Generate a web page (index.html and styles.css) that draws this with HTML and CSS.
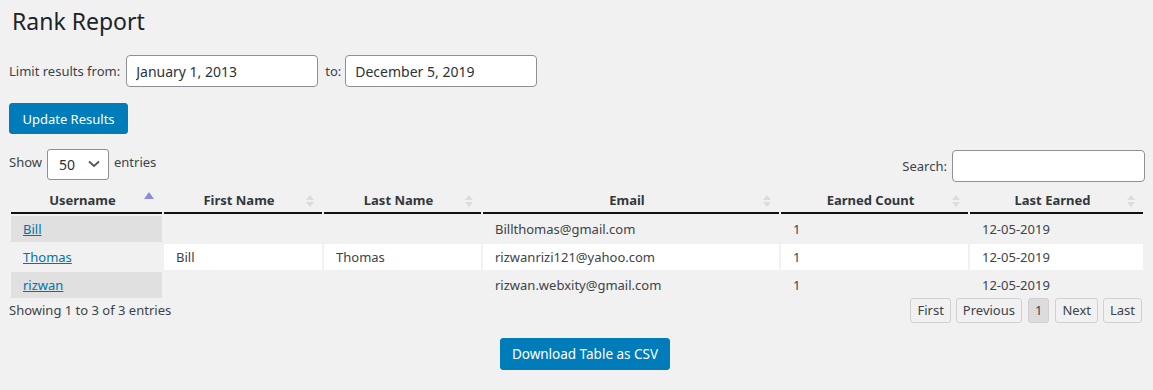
FILE: index.html
```html
<!DOCTYPE html>
<html lang="en">
<head>
  <meta charset="UTF-8" />
  <title>Rank Report</title>
  <link rel="stylesheet" href="styles.css">
</head>
<body>
  <div class="wrap">
    <h1>Rank Report</h1>

    <form class="filters">
      <div class="range">
        <label for="from">Limit results from:</label>
        <input id="from" type="text" value="January 1, 2013" />
        <label for="to">to:</label>
        <input id="to" type="text" value="December 5, 2019" />
      </div>
      <button type="button" class="btn-primary">Update Results</button>
    </form>

    <div class="dt-wrapper">
      <div class="dt-top">
        <div class="dt-length">
          <span>Show</span>
          <div class="select">
            <span>50</span>
            <svg width="12" height="8" viewBox="0 0 12 8"><path d="M1 1.5 L6 6 L11 1.5" fill="none" stroke="#50575e" stroke-width="1.8"/></svg>
          </div>
          <span>entries</span>
        </div>
        <div class="dt-filter">
          <label for="search">Search:</label>
          <input id="search" type="text" />
        </div>
      </div>

      <table class="dt-table">
        <thead>
          <tr>
            <th class="sort-asc col-user">Username</th>
            <th class="col-first">First Name</th>
            <th class="col-last">Last Name</th>
            <th class="col-email">Email</th>
            <th class="col-count">Earned Count</th>
            <th class="col-date">Last Earned</th>
          </tr>
        </thead>
        <tbody>
          <tr class="odd">
            <td class="sorted"><a href="#">Bill</a></td>
            <td></td>
            <td></td>
            <td>Billthomas@gmail.com</td>
            <td>1</td>
            <td>12-05-2019</td>
          </tr>
          <tr class="even">
            <td class="sorted"><a href="#">Thomas</a></td>
            <td>Bill</td>
            <td>Thomas</td>
            <td>rizwanrizi121@yahoo.com</td>
            <td>1</td>
            <td>12-05-2019</td>
          </tr>
          <tr class="odd">
            <td class="sorted"><a href="#">rizwan</a></td>
            <td></td>
            <td></td>
            <td>rizwan.webxity@gmail.com</td>
            <td>1</td>
            <td>12-05-2019</td>
          </tr>
        </tbody>
      </table>

      <div class="dt-bottom">
        <div class="dt-info">Showing 1 to 3 of 3 entries</div>
        <div class="dt-paginate">
          <a class="page-btn" href="#">First</a>
          <a class="page-btn" href="#">Previous</a>
          <a class="page-btn current" href="#">1</a>
          <a class="page-btn" href="#">Next</a>
          <a class="page-btn" href="#">Last</a>
        </div>
      </div>
    </div>

    <div class="export">
      <button type="button" class="btn-primary">Download Table as CSV</button>
    </div>
  </div>
</body>
</html>
```

FILE: styles.css
```css
body { margin: 0; background: #f1f1f1; color: #3c434a; font-family: "Noto Sans", "Open Sans", sans-serif; font-size: 13px; }
.wrap { padding: 0 8px 0 9px; }
h1 { margin: 0; padding: 5px 0 0 3px; font-size: 23px; font-weight: 400; line-height: 32px; color: #1d2327; }

.filters { margin-top: 18px; }
.range { display: flex; align-items: center; }
.range label { margin-right: 6px; }
.range input { width: 192px; height: 32px; box-sizing: border-box; margin-right: 7px; padding: 0 9px; border: 1px solid #8c8f94; border-radius: 4px; background: #fff; font: inherit; font-size: 14px; color: #2c3338; }
.range label[for="to"] { margin-right: 4px; }
.btn-primary { display: inline-block; height: 31px; padding: 0 12px; border: 1px solid #007cba; border-radius: 3px; background: #007cba; color: #fff; font: inherit; font-size: 13px; cursor: pointer; }
.filters .btn-primary { margin-top: 16px; width: 119px; padding: 0; }

.dt-top { display: flex; justify-content: space-between; align-items: flex-start; margin-top: 15px; }
.dt-length { display: flex; align-items: center; gap: 5px; height: 26px; }
.dt-length .select { display: flex; align-items: center; justify-content: space-between; width: 62px; height: 31px; box-sizing: border-box; padding: 0 8px 0 11px; margin-top: 4px; border: 1px solid #8c8f94; border-radius: 3px; background: #fff; font-size: 14px; color: #2c3338; }
.dt-filter { display: flex; align-items: center; gap: 5px; margin-top: 1px; }
.dt-filter input { width: 193px; height: 32px; box-sizing: border-box; margin-right: 0; border: 1px solid #8c8f94; border-radius: 4px; background: #fff; }

.dt-table { width: 100%; border-spacing: 2px; margin-top: 2px; }
.dt-table th { position: relative; height: 24px; padding: 2px 18px 0 10px; line-height: 24px; border-bottom: 2px solid #111; font-weight: 700; color: #32373c; text-align: center; }
.dt-table th::before, .dt-table th::after { content: ""; position: absolute; right: 8px; border-left: 4px solid transparent; border-right: 4px solid transparent; }
.dt-table th::before { top: 9px; border-bottom: 5px solid #dcdcdc; }
.dt-table th::after { top: 16px; border-top: 5px solid #dcdcdc; }
.dt-table th.sort-asc::before { top: 6px; border-left-width: 5px; border-right-width: 5px; border-bottom: 7px solid #8a8ae0; }
.dt-table th.sort-asc::after { display: none; }
.col-user { width: 123px; }
.col-first { width: 130px; }
.col-last { width: 129px; }
.col-email { width: 268px; }
.col-count { width: 159px; }
.dt-table td { height: 25px; padding: 1px 12px 0; line-height: 25px; }
.odd td { background: #f1f1f1; }
.odd td.sorted { background: #e0e0e0; }
.even td { background: #fff; }
.even td.sorted { background: #f1f1f1; }
.dt-table a { color: #0073aa; }

.dt-bottom { display: flex; justify-content: space-between; align-items: flex-start; margin-top: -2px; }
.dt-info { padding-top: 3px; }
.dt-paginate { display: flex; gap: 5px; margin-right: 3px; }
.page-btn { display: block; height: 25px; line-height: 23px; box-sizing: border-box; padding: 0 6px; border: 1px solid #d0d0d0; border-radius: 3px; color: #3c434a; text-decoration: none; }
.page-btn.current { background: #dcdcdc; margin: 0 1px; }

.export { display: flex; justify-content: center; margin-top: 15px; padding-left: 16px; }
.export .btn-primary { height: 32px; padding: 0 11px; font-size: 13.5px; }
```
